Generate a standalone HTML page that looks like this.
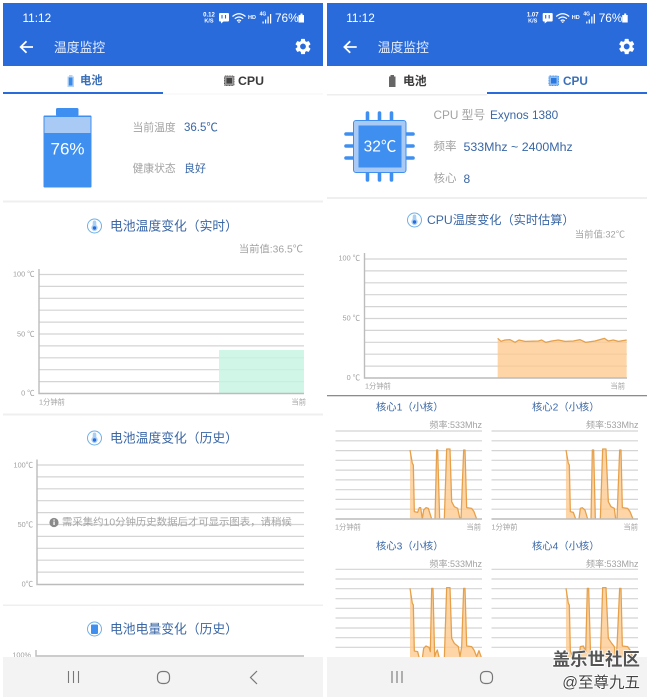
<!DOCTYPE html>
<html lang="zh">
<head>
<meta charset="utf-8">
<title>温度监控</title>
<style>
html,body{margin:0;padding:0;background:#fff;width:650px;height:700px;overflow:hidden}
svg{display:block;position:absolute;left:0;top:0;filter:blur(.35px)}
text{font-family:"Liberation Sans","Noto Sans CJK SC",sans-serif;dominant-baseline:central}
.g{fill:#a2a2a2}.b{fill:#3a67a6}.l{fill:#a0a0a0}.e{text-anchor:end}.m{text-anchor:middle}.w{fill:#fff}
.grid{stroke:#d4d4d4;stroke-width:1.2;fill:none}
.axis{stroke:#bcbcbc;stroke-width:1.4;fill:none}
.fill{fill:#fcc98d;fill-opacity:.78;stroke:none}
.ln{fill:none;stroke:#e6a04a;stroke-width:3.8;stroke-linejoin:round}
.sep{fill:#efefef}
</style>
</head>
<body>
<svg width="650" height="700" viewBox="0 0 650 700" xmlns="http://www.w3.org/2000/svg">
<rect width="650" height="700" fill="#fff"/>

<!-- LEFT HEADER -->
<rect x="3" y="3" width="320" height="63" fill="#2a6bdc"/>
<g>
<text x="22.500" y="18" font-size="11.800" class="w">11:12</text>
<text x="209" y="15.500" font-size="6" class="w m" font-weight="bold">0.12</text>
<text x="209" y="21.500" font-size="5.500" class="w m" font-weight="bold">K/S</text>
<path d="M220 13h8a1 1 0 0 1 1 1v6.500a1 1 0 0 1-1 1h-4.500l-2.500 2v-2h-1a1 1 0 0 1-1-1v-6.500a1 1 0 0 1 1-1z" fill="#fff"/>
<path d="M222 15v3.500M225.500 15v3.500" stroke="#2a6bdc" stroke-width="1.100"/>
<path d="M232.500 16.500q6.500-5.500 13 0M234.800 18.700q4.200-3.500 8.400 0M237 20.800q2-1.700 4 0" stroke="#fff" stroke-width="1.200" fill="none"/>
<path d="M239 23l1.800-1.500h-3.600z" fill="#fff"/>
<text x="252" y="18" font-size="5.500" class="w m" font-weight="bold">HD</text>
<text x="263" y="14.500" font-size="5" class="w m" font-weight="bold">4G</text>
<path d="M262.500 23.500v-2h1.200v2zM265 23.500v-4h1.200v4zM267.500 23.500v-7h1.200v7zM270 23.500v-9.500h1.200v9.500z" fill="#fff"/>
<text x="275" y="18" font-size="11.800" class="w">76%</text>
<path d="M300.500 13.500h2v1.500h1.500v7.500h-5.500v-7.500h2z" fill="#fff"/>
<path d="M33 47H21M26.500 41.200L20.700 47l5.800 5.800" stroke="#fff" stroke-width="1.800" fill="none"/>
<text x="54" y="47.500" font-size="12.800" fill="#e6eefb">温度监控</text>
<path transform="translate(293.400 36.900) scale(.8)" fill="#fff" d="M19.140 12.940c.04-.3.06-.61.06-.94 0-.32-.02-.64-.07-.94l2.030-1.580c.18-.14.23-.41.12-.61l-1.920-3.320c-.12-.22-.37-.29-.59-.22l-2.390.96c-.5-.38-1.030-.7-1.620-.94l-.36-2.540c-.04-.24-.24-.41-.48-.41h-3.840c-.24 0-.43.17-.47.41l-.36 2.540c-.59.24-1.130.57-1.620.94l-2.390-.96c-.22-.08-.47 0-.59.22L2.740 8.870c-.12.21-.08.47.12.61l2.030 1.580c-.05.3-.09.63-.09.94s.02.64.07.94l-2.030 1.580c-.18.14-.23.41-.12.61l1.920 3.320c.12.22.37.29.59.22l2.390-.96c.5.38 1.030.7 1.620.94l.36 2.540c.05.24.24.41.48.41h3.840c.24 0 .44-.17.47-.41l.36-2.540c.59-.24 1.130-.56 1.620-.94l2.390.96c.22.08.47 0 .59-.22l1.920-3.320c.12-.22.07-.47-.12-.61l-2.010-1.580zM12 15.600c-1.980 0-3.600-1.620-3.600-3.600s1.620-3.600 3.600-3.600 3.600 1.620 3.600 3.600-1.620 3.600-3.600 3.600z"/>
</g>

<!-- LEFT TABS -->
<path d="M69 75h3.500v1.500h1.500v10.500h-6.500v-10.500h1.500z" fill="#b5d3f5"/>
<rect x="68.800" y="77.500" width="3.700" height="8" fill="#3a8aea"/>
<text x="80" y="81" font-size="11.300" font-weight="bold" fill="#3a6fb8">电池</text>
<rect x="224.500" y="76" width="9.500" height="9.500" rx="1" fill="#9a9a9a" stroke="#555" stroke-width="1" stroke-dasharray="1 .6"/>
<rect x="226.500" y="78" width="5.500" height="5.500" fill="#444"/>
<text x="238" y="81" font-size="12.300" font-weight="bold" fill="#3a3a3a">CPU</text>
<rect x="3" y="92" width="160" height="2" fill="#2a6bdc"/>
<rect x="163" y="93.500" width="160" height="1" fill="#f5f5f5"/>

<!-- BATTERY -->
<rect x="56" y="108" width="22.500" height="8" rx="1.500" fill="#3f8ff0"/>
<rect x="43.500" y="115.500" width="48" height="72" rx="1" fill="#3f8ff0"/>
<rect x="44.500" y="117" width="46" height="16" fill="#a9caf5"/>
<text x="67.500" y="149" font-size="17" class="w m">76%</text>
<text x="132.500" y="128" font-size="10.800" class="g">当前温度</text>
<text x="184" y="128" font-size="11.500" class="b">36.5℃</text>
<text x="132.500" y="169" font-size="10.800" class="g">健康状态</text>
<text x="184" y="169" font-size="11" class="b">良好</text>
<rect x="3" y="200.500" width="320" height="2" class="sep"/>

<!-- CHART 1 -->
<circle cx="94.500" cy="226" r="7" fill="#fff" stroke="#6fb0e6" stroke-width="1"/>
<path d="M94.500 220.500a1.800 1.800 0 0 1 1.800 1.800v2.800a3.200 3.200 0 1 1-3.600 0v-2.800a1.800 1.800 0 0 1 1.800-1.800z" fill="#a9cff2"/>
<circle cx="94.500" cy="228" r="1.700" fill="#2a6bdc"/>
<text x="110" y="226" font-size="12.800" class="b">电池温度变化（实时）</text>
<text x="303" y="250" font-size="10.300" class="g e">当前值:36.5℃</text>
<path class="grid" d="M39 274.500H304M39 286.400H304M39 298.300H304M39 310.200H304M39 322.100H304M39 334H304M39 345.900H304M39 357.800H304M39 369.700H304M39 381.600H304"/>
<rect x="219" y="350" width="85" height="43.500" fill="#c4f4e1" fill-opacity=".8"/>
<path class="axis" d="M39 269V393.500H304"/>
<text x="34.500" y="274" font-size="7.300" class="l e">100 ℃</text>
<text x="34.500" y="334" font-size="7.300" class="l e">50 ℃</text>
<text x="34.500" y="393" font-size="7.300" class="l e">0 ℃</text>
<text x="39" y="402" font-size="7.300" class="l">1分钟前</text>
<text x="306" y="402" font-size="7.300" class="l e">当前</text>
<rect x="3" y="413.500" width="320" height="2" class="sep"/>

<!-- CHART 2 -->
<circle cx="94.500" cy="438" r="7" fill="#fff" stroke="#6fb0e6" stroke-width="1"/>
<path d="M94.500 432.500a1.800 1.800 0 0 1 1.800 1.800v2.800a3.200 3.200 0 1 1-3.600 0v-2.800a1.800 1.800 0 0 1 1.800-1.800z" fill="#a9cff2"/>
<circle cx="94.500" cy="440" r="1.700" fill="#2a6bdc"/>
<text x="110" y="438" font-size="12.800" class="b">电池温度变化（历史）</text>
<path class="grid" d="M37 465H304M37 476.900H304M37 488.800H304M37 500.700H304M37 512.600H304M37 524.500H304M37 536.400H304M37 548.300H304M37 560.200H304M37 572.100H304"/>
<path class="axis" d="M37 459.500V584.500H304" stroke="#aaa"/>
<text x="33" y="465" font-size="7.300" class="l e">100℃</text>
<text x="33" y="524.500" font-size="7.300" class="l e">50℃</text>
<text x="33" y="584" font-size="7.300" class="l e">0℃</text>
<circle cx="54" cy="522.500" r="4.600" fill="#8a8a8a"/>
<rect x="53.400" y="521.500" width="1.300" height="3.500" fill="#fff"/>
<rect x="53.400" y="519.500" width="1.300" height="1.200" fill="#fff"/>
<text x="62" y="523" font-size="10.400" fill="#a6a6a6">需采集约10分钟历史数据后才可显示图表，请稍候</text>
<rect x="3" y="604.500" width="320" height="1.500" class="sep"/>

<!-- CHART 3 -->
<circle cx="94.500" cy="629" r="7" fill="#fff" stroke="#6fb0e6" stroke-width="1"/>
<rect x="91" y="624.500" width="7" height="9.500" rx="1" fill="#3f8ff0"/>
<text x="110" y="629" font-size="12.800" class="b">电池电量变化（历史）</text>
<path class="axis" d="M36 650V656H304"/>
<text x="31" y="655" font-size="7.300" class="l e">100%</text>

<!-- RIGHT HEADER -->
<rect x="327" y="3" width="320" height="63" fill="#2a6bdc"/>
<g transform="translate(323.700 0)">
<text x="22.500" y="18" font-size="11.800" class="w">11:12</text>
<text x="209" y="15.500" font-size="6" class="w m" font-weight="bold">1.07</text>
<text x="209" y="21.500" font-size="5.500" class="w m" font-weight="bold">K/S</text>
<path d="M220 13h8a1 1 0 0 1 1 1v6.500a1 1 0 0 1-1 1h-4.500l-2.500 2v-2h-1a1 1 0 0 1-1-1v-6.500a1 1 0 0 1 1-1z" fill="#fff"/>
<path d="M222 15v3.500M225.500 15v3.500" stroke="#2a6bdc" stroke-width="1.100"/>
<path d="M232.500 16.500q6.500-5.500 13 0M234.800 18.700q4.200-3.500 8.400 0M237 20.800q2-1.700 4 0" stroke="#fff" stroke-width="1.200" fill="none"/>
<path d="M239 23l1.800-1.500h-3.600z" fill="#fff"/>
<text x="252" y="18" font-size="5.500" class="w m" font-weight="bold">HD</text>
<text x="263" y="14.500" font-size="5" class="w m" font-weight="bold">4G</text>
<path d="M262.500 23.500v-2h1.200v2zM265 23.500v-4h1.200v4zM267.500 23.500v-7h1.200v7zM270 23.500v-9.500h1.200v9.500z" fill="#fff"/>
<text x="275" y="18" font-size="11.800" class="w">76%</text>
<path d="M300.500 13.500h2v1.500h1.500v7.500h-5.500v-7.500h2z" fill="#fff"/>
<path d="M33 47H21M26.500 41.200L20.700 47l5.800 5.800" stroke="#fff" stroke-width="1.800" fill="none"/>
<text x="54" y="47.500" font-size="12.800" fill="#e6eefb">温度监控</text>
<path transform="translate(293.400 36.900) scale(.8)" fill="#fff" d="M19.140 12.940c.04-.3.06-.61.06-.94 0-.32-.02-.64-.07-.94l2.030-1.580c.18-.14.23-.41.12-.61l-1.920-3.320c-.12-.22-.37-.29-.59-.22l-2.390.96c-.5-.38-1.030-.7-1.620-.94l-.36-2.540c-.04-.24-.24-.41-.48-.41h-3.840c-.24 0-.43.17-.47.41l-.36 2.540c-.59.24-1.130.57-1.620.94l-2.390-.96c-.22-.08-.47 0-.59.22L2.740 8.870c-.12.21-.08.47.12.61l2.030 1.580c-.05.3-.09.63-.09.94s.02.64.07.94l-2.030 1.580c-.18.14-.23.41-.12.61l1.920 3.320c.12.22.37.29.59.22l2.390-.96c.5.38 1.030.7 1.620.94l.36 2.540c.05.24.24.41.48.41h3.840c.24 0 .44-.17.47-.41l.36-2.540c.59-.24 1.130-.56 1.620-.94l2.390.96c.22.08.47 0 .59-.22l1.920-3.320c.12-.22.07-.47-.12-.61l-2.010-1.580zM12 15.600c-1.980 0-3.600-1.620-3.600-3.600s1.620-3.600 3.600-3.600 3.600 1.620 3.600 3.600-1.620 3.600-3.600 3.600z"/>
</g>

<!-- RIGHT TABS -->
<path d="M390.500 75h3.500v1.500h1.500v10.500h-6.500v-10.500h1.500z" fill="#666"/>
<text x="403" y="81" font-size="11.800" font-weight="bold" fill="#3a3a3a">电池</text>
<rect x="549" y="76" width="9.500" height="9.500" rx="1" fill="#8fbcf0" stroke="#3f8ff0" stroke-width="1" stroke-dasharray="1 .6"/>
<rect x="551" y="78" width="5.500" height="5.500" fill="#2a78e0"/>
<text x="563" y="81" font-size="11.800" font-weight="bold" fill="#3a6fb8">CPU</text>
<rect x="327" y="94" width="160" height="1.500" fill="#eee"/>
<rect x="487" y="92" width="160" height="2" fill="#2a6bdc"/>

<!-- CPU ICON -->
<path d="M367.500 113v8M379.500 113v8M391.500 113v8M367.500 172v8M379.500 172v8M391.500 172v8M346 134h8M346 146h8M346 158h8M405 134h8M405 146h8M405 158h8" stroke="#3f8ff0" stroke-width="3.600" stroke-linecap="round"/>
<rect x="353.500" y="120.500" width="52.500" height="52" rx="2.500" fill="#a9caf5" stroke="#3f8ff0" stroke-width="1"/>
<rect x="358.500" y="125.500" width="43" height="42" fill="#3f8ff0"/>
<text x="380" y="147" font-size="15.500" class="w m">32℃</text>
<text x="433.500" y="115" font-size="11.800" class="g">CPU 型号</text>
<text x="490" y="115" font-size="11.800" class="b">Exynos 1380</text>
<text x="433.500" y="147" font-size="11.500" class="g">频率</text>
<text x="463.500" y="147" font-size="12.400" class="b">533Mhz ~ 2400Mhz</text>
<text x="433.500" y="179" font-size="11.500" class="g">核心</text>
<text x="463.500" y="179" font-size="12" class="b">8</text>
<rect x="327" y="197" width="320" height="2" class="sep"/>

<!-- CPU CHART -->
<circle cx="414.500" cy="220" r="7" fill="#fff" stroke="#6fb0e6" stroke-width="1"/>
<path d="M414.500 214.500a1.800 1.800 0 0 1 1.800 1.800v2.800a3.200 3.200 0 1 1-3.600 0v-2.800a1.800 1.800 0 0 1 1.800-1.800z" fill="#a9cff2"/>
<circle cx="414.500" cy="222" r="1.700" fill="#2a6bdc"/>
<text x="427" y="220" font-size="12.200" class="b">CPU温度变化（实时估算）</text>
<text x="625" y="234.500" font-size="9.300" class="g e">当前值:32℃</text>
<path class="grid" d="M364.500 259H627M364.500 270.900H627M364.500 282.800H627M364.500 294.700H627M364.500 306.600H627M364.500 318.500H627M364.500 330.400H627M364.500 342.300H627M364.500 354.200H627M364.500 366.100H627"/>
<g transform="translate(325 200) scale(.33333)">
<path class="fill" d="M518 535V415L528 424L540 420L555 419L570 427L582 420L600 424L640 423L650 420L662 427L680 423L700 420L720 424L745 423L765 419L782 427L810 423L838 415L850 423L865 420L880 424L905 420V535Z"/>
<path class="ln" d="M518 415L528 424L540 420L555 419L570 427L582 420L600 424L640 423L650 420L662 427L680 423L700 420L720 424L745 423L765 419L782 427L810 423L838 415L850 423L865 420L880 424L905 420"/>
</g>
<path class="axis" d="M364.500 253V378H627"/>
<text x="360" y="258" font-size="7.300" class="l e">100 ℃</text>
<text x="360" y="318" font-size="7.300" class="l e">50 ℃</text>
<text x="360" y="377.500" font-size="7.300" class="l e">0 ℃</text>
<text x="365" y="386" font-size="7.300" class="l">1分钟前</text>
<text x="625" y="386" font-size="7.300" class="l e">当前</text>
<rect x="327" y="395" width="320" height="1.300" fill="#8c8c8c"/>

<!-- CORES -->
<text x="376" y="408" font-size="10.300" class="b">核心1（小核）</text>
<text x="532" y="408" font-size="10.300" class="b">核心2（小核）</text>
<text x="482" y="425" font-size="9" class="g e">频率:533Mhz</text>
<text x="638.500" y="425" font-size="9" class="g e">频率:533Mhz</text>
<path class="grid" d="M335.500 431H482M335.500 440.800H482M335.500 450.600H482M335.500 460.300H482M335.500 470.100H482M335.500 479.900H482M335.500 489.700H482M335.500 499.400H482M335.500 509.200H482M491.500 431H638M491.500 440.800H638M491.500 450.600H638M491.500 460.300H638M491.500 470.100H638M491.500 479.900H638M491.500 489.700H638M491.500 499.400H638M491.500 509.200H638"/>
<g transform="translate(325 395) scale(.33333)">
<path class="fill" d="M255 372V165L262 205L265 210L268 350L278 352L283 338L287 338L292 372L296 345L303 338L310 340L320 372H330L335 165H338L344 372H358L365 162H375L380 320L388 335L398 340L405 372H408L416 165H420L425 338L440 340L447 350L455 372Z"/>
<path class="ln" d="M255 165L262 205L265 210L268 350L278 352L283 338L287 338L292 372L296 345L303 338L310 340L320 372M330 372L335 165H338L344 372M358 372L365 162H375L380 320L388 335L398 340L405 372M408 372L416 165H420L425 338L440 340L447 350L455 372"/>
<path class="fill" d="M723 372V165L730 205L733 210L736 350L745 352L752 372H762L766 340L772 338L780 345L788 372H798L802 165H806L811 372H826L833 162H843L850 320L858 335L868 340L872 372H876L884 165H888L892 338L908 340L915 350L924 372Z"/>
<path class="ln" d="M723 165L730 205L733 210L736 350L745 352L752 372M762 372L766 340L772 338L780 345L788 372M798 372L802 165H806L811 372M826 372L833 162H843L850 320L858 335L868 340L872 372M876 372L884 165H888L892 338L908 340L915 350L924 372"/>
</g>
<path class="axis" d="M335.500 519H482M491.500 519H638" stroke="#c4c4c4"/>
<text x="335" y="527" font-size="7.300" class="l">1分钟前</text>
<text x="481" y="527" font-size="7.300" class="l e">当前</text>
<text x="491.500" y="527" font-size="7.300" class="l">1分钟前</text>
<text x="638" y="527" font-size="7.300" class="l e">当前</text>

<text x="376" y="547" font-size="10.300" class="b">核心3（小核）</text>
<text x="532" y="547" font-size="10.300" class="b">核心4（小核）</text>
<text x="482" y="564" font-size="9" class="g e">频率:533Mhz</text>
<text x="638.500" y="564" font-size="9" class="g e">频率:533Mhz</text>
<path class="grid" d="M335.500 569.300H482M335.500 579H482M335.500 588.700H482M335.500 598.700H482M335.500 608.300H482M335.500 618H482M335.500 628H482M335.500 637.700H482M335.500 647.300H482M491.500 569.300H638M491.500 579H638M491.500 588.700H638M491.500 598.700H638M491.500 608.300H638M491.500 618H638M491.500 628H638M491.500 637.700H638M491.500 647.300H638"/>
<g transform="translate(325 535) scale(.33333)">
<path class="fill" d="M255 370V160L262 205L265 210L268 348L278 350L283 370H292L296 340L303 333L312 337L316 350L320 160H324L329 365L332 355L337 345L343 370H358L365 158H375L380 310L388 325L400 335L405 365L410 335L416 160H420L425 333L440 335L447 345L455 365L462 347L470 370Z"/>
<path class="ln" d="M255 160L262 205L265 210L268 348L278 350L283 370M292 370L296 340L303 333L312 337L316 350L320 160H324L329 365L332 355L337 345L343 370M358 370L365 158H375L380 310L388 325L400 335L405 365L410 335L416 160H420L425 333L440 335L447 345L455 365L462 347L470 370"/>
<path class="fill" d="M723 370V160L730 205L733 210L736 348L745 370H762L766 335L775 333L782 350L787 160H791L797 370H826L833 158H843L850 310L860 325L868 335L872 370L876 335L884 160H888L892 333L908 335L915 345L924 370Z"/>
<path class="ln" d="M723 160L730 205L733 210L736 348L745 370M762 370L766 335L775 333L782 350L787 160H791L797 370M826 370L833 158H843L850 310L860 325L868 335L872 370L876 335L884 160H888L892 333L908 335L915 345L924 370"/>
</g>

<!-- NAV BARS -->
<rect x="3" y="657" width="320" height="40" fill="#f3f3f3"/>
<rect x="327" y="657" width="320" height="40" fill="#f3f3f3"/>
<path d="M68.500 671v12M73.500 671v12M78.500 671v12" stroke="#777" stroke-width="1.100"/>
<rect x="157.500" y="671.500" width="12" height="12" rx="4.500" fill="none" stroke="#777" stroke-width="1.200"/>
<path d="M257 671l-6.500 6.500 6.500 6.500" fill="none" stroke="#777" stroke-width="1.200"/>
<path d="M392 671v12M397 671v12M402 671v12" stroke="#777" stroke-width="1.100"/>
<rect x="480.500" y="671.500" width="12" height="12" rx="4.500" fill="none" stroke="#777" stroke-width="1.200"/>

<!-- WATERMARK -->
<text x="640" y="659.500" font-size="17.500" class="e" font-weight="bold" fill="#555" stroke="#fff" stroke-width="1.400" paint-order="stroke">盖乐世社区</text>
<text x="640" y="683" font-size="15.500" class="e" fill="#444" stroke="#fff" stroke-width="1.400" paint-order="stroke">@至尊九五</text>
</svg>
</body>
</html>
